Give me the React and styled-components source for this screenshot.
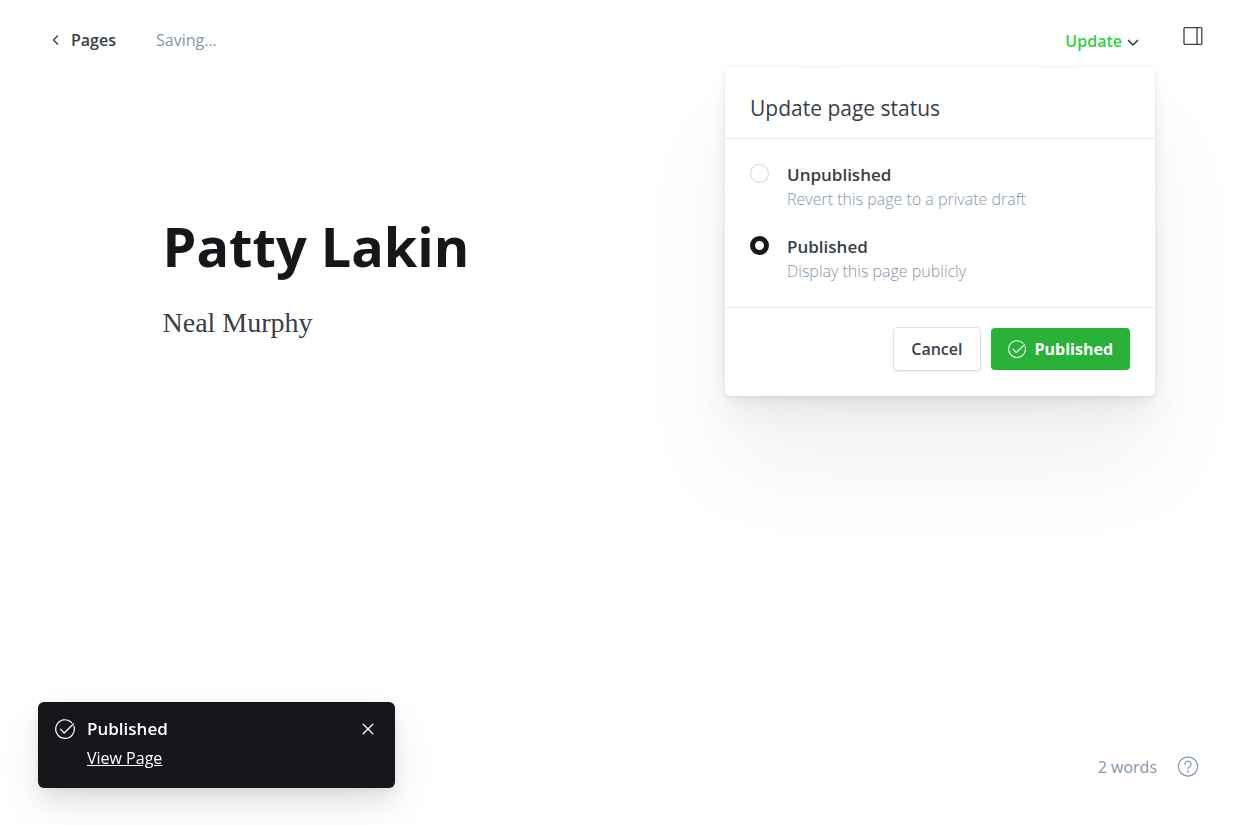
import React, { useState } from "react";
import styled, { createGlobalStyle } from "styled-components";

const colors = {
  ink: "#15171a",
  text: "#394047",
  muted: "#8496a9",
  line: "#e6e9eb",
  green: "#30cf43",
  greenButton: "#2ab13a",
};

const GlobalStyle = createGlobalStyle`
  *, *::before, *::after { box-sizing: border-box; }
  body {
    margin: 0;
    background: #fff;
    color: ${colors.text};
    font-family: "Open Sans", "Noto Sans", sans-serif;
    font-size: 16px;
    line-height: 24px;
  }
  button, input { font: inherit; color: inherit; }
  button { cursor: pointer; }
  h1, h2, p { margin: 0; }
`;

const Page = styled.div`
  min-height: 100vh;
  display: flex;
  flex-direction: column;
`;

const TopBar = styled.header`
  display: flex;
  align-items: flex-start;
  justify-content: space-between;
  padding: 24px 45px 0 52px;
`;

const Group = styled.div`
  display: flex;
  align-items: center;
  gap: ${(p) => p.$gap}px;
`;

const BackLink = styled.a`
  display: flex;
  align-items: center;
  gap: 11px;
  padding-top: 4px;
  color: ${colors.text};
  font-size: 16px;
  line-height: 24px;
  font-weight: 600;
  text-decoration: none;
`;

const SaveState = styled.span`
  padding-top: 4px;
  color: ${colors.muted};
  font-size: 16px;
`;

const Actions = styled.div`
  display: flex;
  align-items: flex-start;
  gap: 42px;
`;

const MenuAnchor = styled.div`
  position: relative;
`;

const UpdateButton = styled.button`
  display: flex;
  align-items: center;
  gap: 5px;
  padding: 5px 0 0;
  border: 0;
  background: none;
  color: ${colors.green};
  font-size: 16px;
  line-height: 24px;
  font-weight: 600;

  svg { margin-top: 4px; }
`;

const IconButton = styled.button`
  display: flex;
  padding: 0;
  border: 0;
  background: none;
  color: ${(p) => p.$color || colors.text};
`;

const StatusMenu = styled.form`
  position: absolute;
  top: 44px;
  right: -16px;
  width: 430px;
  border-radius: 5px;
  background: #fff;
  box-shadow:
    0 0 7px rgba(0, 0, 0, 0.08),
    0 2px 2px rgba(0, 0, 0, 0.02),
    0 7px 12px rgba(0, 0, 0, 0.03),
    0 20px 30px rgba(0, 0, 0, 0.04),
    0 70px 100px rgba(0, 0, 0, 0.06);
`;

const MenuTitle = styled.h2`
  padding: 25px 25px 15px;
  border-bottom: 1px solid ${colors.line};
  font-size: 21px;
  line-height: 30px;
  font-weight: 400;
`;

const Options = styled.div`
  display: flex;
  flex-direction: column;
  gap: 22px;
  padding: 23px 25px;
  border-bottom: 1px solid ${colors.line};
`;

const Option = styled.label`
  display: flex;
  align-items: flex-start;
  gap: 18px;
  cursor: pointer;
`;

const Radio = styled.input`
  appearance: none;
  flex: none;
  width: 19px;
  height: 19px;
  margin: 2px 0 0;
  border: 1px solid #ced4d9;
  border-radius: 50%;
  background: #fff;

  &:checked { border: 5px solid ${colors.ink}; }
`;

const OptionText = styled.span`
  display: flex;
  flex-direction: column;
`;

const OptionName = styled.span`
  font-size: 17px;
  line-height: 25px;
  font-weight: 600;
`;

const OptionHint = styled.span`
  color: ${colors.muted};
  font-size: 16px;
  line-height: 25px;
  font-weight: 300;
`;

const MenuFooter = styled.div`
  display: flex;
  justify-content: flex-end;
  align-items: center;
  gap: 10px;
  padding: 19px 25px 25px;
`;

const CancelButton = styled.button`
  height: 44px;
  padding: 0 17px;
  border: 1px solid #dde1e5;
  border-radius: 4px;
  background: #fff;
  box-shadow: 0 1px 2px rgba(0, 0, 0, 0.08);
  font-size: 16px;
  font-weight: 600;
`;

const PublishButton = styled.button`
  display: flex;
  align-items: center;
  gap: 9px;
  height: 42px;
  padding: 0 17px;
  border: 0;
  border-radius: 4px;
  background: ${colors.greenButton};
  color: #fff;
  font-size: 16px;
  font-weight: 700;
`;

const Editor = styled.main`
  flex: 1;
  padding: 158px 13% 0;
`;

const Title = styled.h1`
  color: ${colors.ink};
  font-size: 54px;
  line-height: 70px;
  font-weight: 700;
`;

const Body = styled.p`
  margin-top: 24px;
  font-family: Georgia, "Liberation Serif", serif;
  font-size: 28px;
  line-height: 36px;
`;

const StatusBar = styled.footer`
  display: flex;
  justify-content: flex-end;
  align-items: center;
  gap: 20px;
  padding: 0 51px 46px;
  color: ${colors.muted};
  font-size: 16px;
`;

const Toast = styled.aside`
  position: fixed;
  left: 38px;
  bottom: 37px;
  display: flex;
  align-items: flex-start;
  gap: 12px;
  width: 357px;
  padding: 15px 21px 17px 17px;
  border-radius: 6px;
  background: ${colors.ink};
  color: #fff;
  box-shadow:
    0 2px 8px rgba(0, 0, 0, 0.06),
    0 12px 24px rgba(0, 0, 0, 0.08),
    0 20px 50px rgba(0, 0, 0, 0.07);
`;

const ToastText = styled.div`
  flex: 1;
  display: flex;
  flex-direction: column;
  align-items: flex-start;
  gap: 5px;
`;

const ToastTitle = styled.strong`
  font-size: 17px;
  line-height: 24px;
  font-weight: 600;
`;

const ToastLink = styled.a`
  color: #fff;
  font-size: 16px;
  line-height: 25px;
`;

const CheckCircle = ({ size }) => (
  <svg width={size} height={size} viewBox="0 0 20 20" fill="none" stroke="currentColor" strokeWidth="1.2" strokeLinecap="round" strokeLinejoin="round" aria-hidden="true">
    <path d="M18.9 7.3A9.3 9.3 0 1 1 16.6 3.5" />
    <path d="M5.5 10.2l3.7 3.8 9.4-9.2" />
  </svg>
);

const ToastIcon = styled.span`
  display: flex;
  padding-top: 2px;
`;

const ToastClose = styled(IconButton)`
  padding: 6px 0;
`;

const options = [
  { value: "draft", name: "Unpublished", hint: "Revert this page to a private draft" },
  { value: "published", name: "Published", hint: "Display this page publicly" },
];

export default function App() {
  const [status, setStatus] = useState("published");

  return (
    <Page>
      <GlobalStyle />
      <TopBar>
        <Group $gap={40}>
          <BackLink href="#pages">
            <svg width="8" height="10" viewBox="0 0 8 10" fill="none" stroke="currentColor" strokeWidth="1.5" strokeLinecap="round" strokeLinejoin="round" aria-hidden="true">
              <path d="M5.5 1L1.5 5l4 4" />
            </svg>
            Pages
          </BackLink>
          <SaveState>Saving...</SaveState>
        </Group>
        <Actions>
          <MenuAnchor>
            <UpdateButton type="button" aria-expanded="true">
              Update
              <svg width="12" height="8" viewBox="0 0 12 8" fill="none" stroke={colors.text} strokeWidth="1.7" strokeLinecap="round" strokeLinejoin="round" aria-hidden="true">
                <path d="M1.5 1.5L6 6l4.500-4.500" />
              </svg>
            </UpdateButton>
            <StatusMenu onSubmit={(e) => e.preventDefault()}>
              <MenuTitle>Update page status</MenuTitle>
              <Options role="radiogroup" aria-label="Page status">
                {options.map((o) => (
                  <Option key={o.value}>
                    <Radio
                      type="radio"
                      name="status"
                      value={o.value}
                      checked={status === o.value}
                      onChange={() => setStatus(o.value)}
                    />
                    <OptionText>
                      <OptionName>{o.name}</OptionName>
                      <OptionHint>{o.hint}</OptionHint>
                    </OptionText>
                  </Option>
                ))}
              </Options>
              <MenuFooter>
                <CancelButton type="button">Cancel</CancelButton>
                <PublishButton type="submit">
                  <CheckCircle size={18} />
                  Published
                </PublishButton>
              </MenuFooter>
            </StatusMenu>
          </MenuAnchor>
          <IconButton type="button" aria-label="Settings">
            <svg width="24" height="24" viewBox="0 0 24 24" fill="none" stroke="currentColor" strokeWidth="1.3" aria-hidden="true">
              <rect x="3" y="3.600" width="17.800" height="16.800" rx="1" />
              <path d="M16 3.600v16.800" />
            </svg>
          </IconButton>
        </Actions>
      </TopBar>

      <Editor>
        <Title>Patty Lakin</Title>
        <Body>Neal Murphy</Body>
      </Editor>

      <StatusBar>
        <span>2 words</span>
        <IconButton type="button" aria-label="Help" $color={colors.muted}>
          <svg width="22" height="22" viewBox="0 0 22 22" fill="none" stroke="currentColor" strokeWidth="1.200" strokeLinecap="round" aria-hidden="true">
            <circle cx="11" cy="10.500" r="9.600" />
            <path d="M8 8.200a3 3 0 1 1 4.600 2.500c-1 .6-1.600 1-1.600 2.200" />
            <circle cx="11" cy="15.400" r="0.400" fill="currentColor" />
          </svg>
        </IconButton>
      </StatusBar>

      <Toast role="status">
        <ToastIcon>
          <CheckCircle size={20} />
        </ToastIcon>
        <ToastText>
          <ToastTitle>Published</ToastTitle>
          <ToastLink href="#view">View Page</ToastLink>
        </ToastText>
        <ToastClose type="button" aria-label="Close" $color="#fff">
          <svg width="12" height="12" viewBox="0 0 12 12" fill="none" stroke="currentColor" strokeWidth="1.300" strokeLinecap="round" aria-hidden="true">
            <path d="M1.200 1.200l9.600 9.600M10.800 1.200l-9.600 9.600" />
          </svg>
        </ToastClose>
      </Toast>
    </Page>
  );
}
